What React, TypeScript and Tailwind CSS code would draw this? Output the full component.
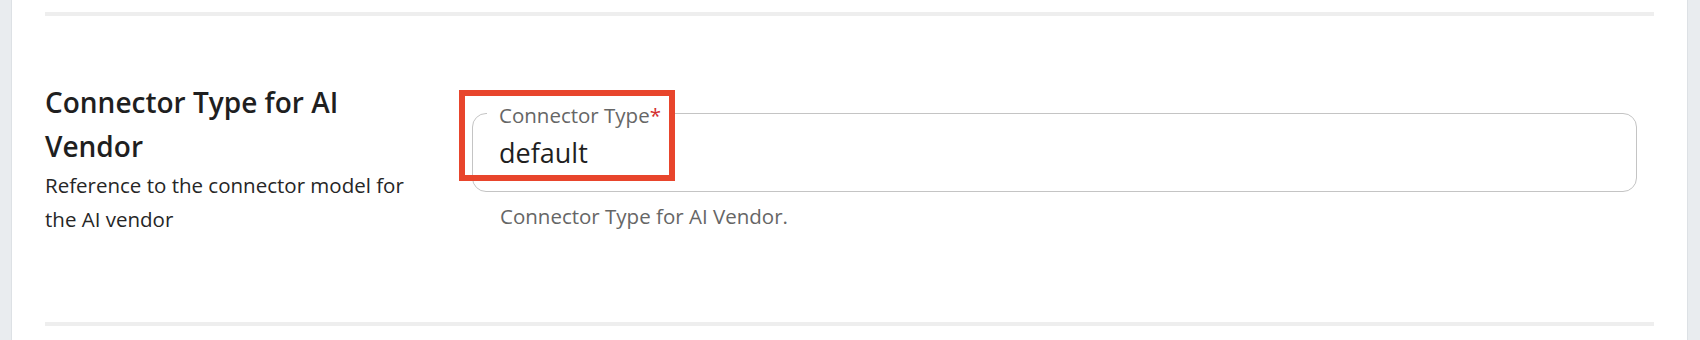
export default function App() {
  return (
    <div
      className="flex h-[340px] w-full bg-white text-[#212121]"
      style={{ fontFamily: "'Open Sans', 'Noto Sans', sans-serif" }}
    >
      {/* left rail */}
      <div className="w-[12px] shrink-0 bg-[#e9ecef] border-r border-[#dde1e5]" />

      {/* form panel */}
      <div className="flex-1 flex flex-col px-[33px]">
        <div className="mt-[12px] h-[4px] bg-[#eeeeee]" />

        <div className="flex h-[306px]">
          {/* field description */}
          <div className="w-[375px] shrink-0 pt-[64px]">
            <h3 className="text-[28px] leading-[44px] font-semibold text-[#1f1f1f]">
              Connector Type for AI Vendor
            </h3>
            <p className="text-[20.5px] leading-[34px] text-[#262626]">
              Reference to the connector model for the AI vendor
            </p>
          </div>

          {/* field input */}
          <div className="flex-1 ml-[52px] mr-[17px] pt-[97px]">
            <div className="relative h-[79px] rounded-[14px] border-[1.5px] border-[#c4c4c4] pl-[26px] pt-[21px]">
              <span className="absolute left-[14px] top-[-11px] bg-white px-[12px] text-[20.5px] leading-[24px] text-[#666666]">
                Connector Type<span className="text-[#d32f2f]">*</span>
              </span>
              <div className="text-[27px] leading-[36px] text-[#1f1f1f]">default</div>
              <div className="absolute left-[-14px] top-[-24px] h-[91px] w-[216px] border-[6px] border-[#e8452c]" />
            </div>
            <p className="mt-[10px] pl-[28px] text-[20.5px] leading-[28px] text-[#666666]">
              Connector Type for AI Vendor.
            </p>
          </div>
        </div>

        <div className="h-[4px] bg-[#eeeeee]" />
      </div>

      {/* right rail */}
      <div className="w-[13px] shrink-0 bg-[#e9ecef] border-l border-[#dde1e5]" />
    </div>
  );
}
